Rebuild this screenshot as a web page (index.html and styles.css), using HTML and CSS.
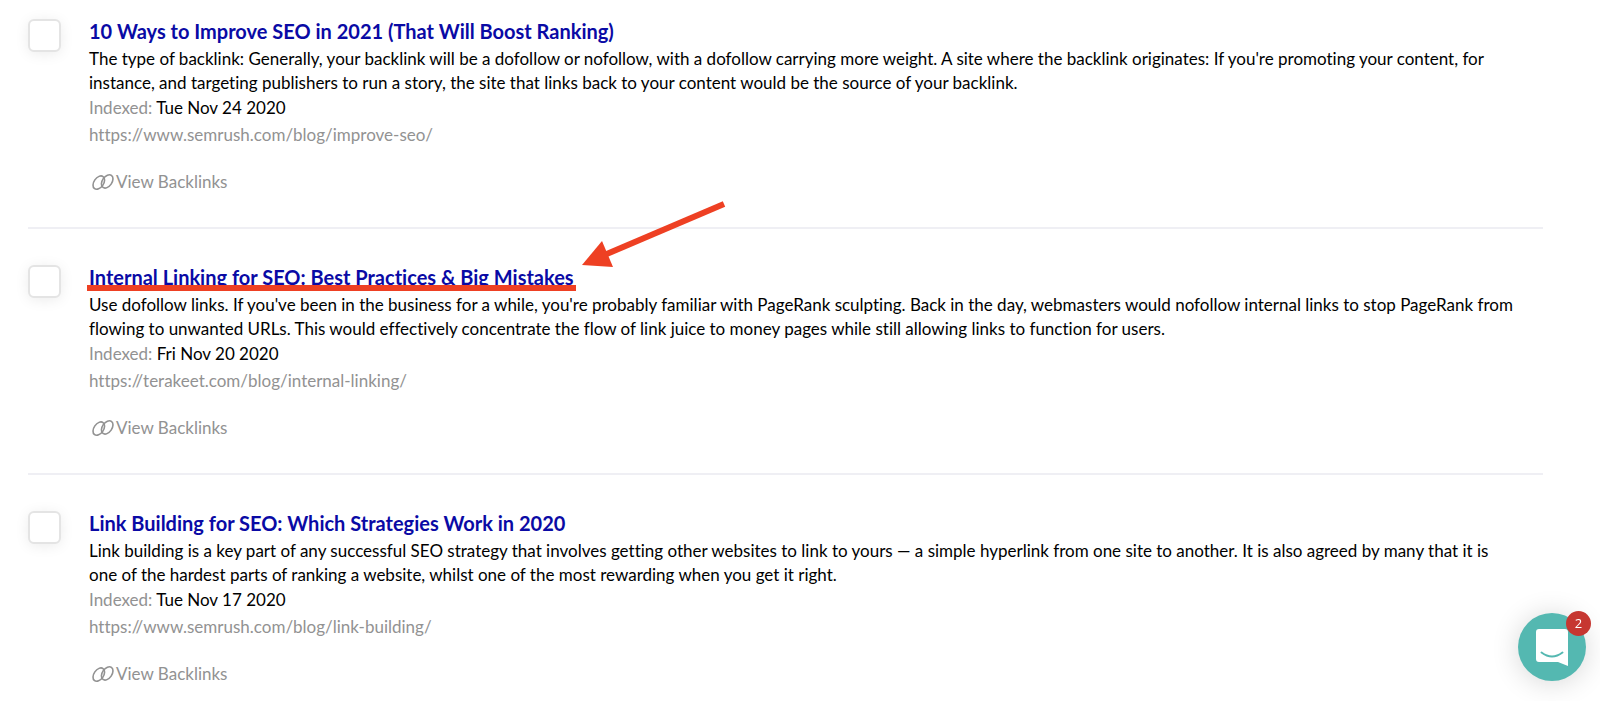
FILE: index.html
```html
<!DOCTYPE html>
<html lang="en">
<head>
  <meta charset="UTF-8" />
  <meta name="viewport" content="width=device-width, initial-scale=1.0"/>
  <title>Backlink Results</title>
  <link rel="stylesheet" href="styles.css">
</head>
<body>

  <!-- link icon, reused by every result -->
  <svg class="sprite" aria-hidden="true">
    <symbol id="icon-link" viewBox="0 0 24 18">
      <g fill="none" stroke="currentColor" stroke-width="1.6">
        <ellipse cx="7.8" cy="9.6" rx="7.4" ry="4.8" transform="rotate(-55 7.8 9.6)"/>
        <ellipse cx="16.2" cy="8.4" rx="7.4" ry="4.8" transform="rotate(-55 16.2 8.4)"/>
      </g>
    </symbol>
  </svg>

  <main class="results">
    <article class="result">
      <input type="checkbox" class="check" id="result-1" aria-labelledby="title-1">
      <div class="result-body">
        <h2 class="title"><a href="#" id="title-1">10 Ways to Improve SEO in 2021 (That Will Boost Ranking)</a></h2>
        <p class="description">The type of backlink: Generally, your backlink will be a dofollow or nofollow, with a dofollow carrying more weight. A site where the backlink originates: If you're promoting your content, for instance, and targeting publishers to run a story, the site that links back to your content would be the source of your backlink.</p>
        <div class="indexed"><span class="label">Indexed:</span> Tue Nov 24 2020</div>
        <a href="#" class="url">https://www.semrush.com/blog/improve-seo/</a>
        <button class="backlinks"><svg class="icon"><use href="#icon-link"/></svg>View Backlinks</button>
      </div>
    </article>

    <article class="result">
      <input type="checkbox" class="check" id="result-2" aria-labelledby="title-2">
      <div class="result-body">
        <h2 class="title marked">
          <a href="#" id="title-2">Internal Linking for SEO: Best Practices &amp; Big Mistakes</a>
          <svg class="arrow" viewBox="0 0 144 68" aria-hidden="true">
            <path d="M142 3 L20 55" stroke="#ee4023" stroke-width="6"/>
            <path d="M0 64 L20 40 L31 66 Z" fill="#ee4023"/>
          </svg>
        </h2>
        <p class="description">Use dofollow links. If you've been in the business for a while, you're probably familiar with PageRank sculpting. Back in the day, webmasters would nofollow internal links to stop PageRank from flowing to unwanted URLs. This would effectively concentrate the flow of link juice to money pages while still allowing links to function for users.</p>
        <div class="indexed"><span class="label">Indexed:</span> Fri Nov 20 2020</div>
        <a href="#" class="url">https://terakeet.com/blog/internal-linking/</a>
        <button class="backlinks"><svg class="icon"><use href="#icon-link"/></svg>View Backlinks</button>
      </div>
    </article>

    <article class="result">
      <input type="checkbox" class="check" id="result-3" aria-labelledby="title-3">
      <div class="result-body">
        <h2 class="title"><a href="#" id="title-3">Link Building for SEO: Which Strategies Work in 2020</a></h2>
        <p class="description">Link building is a key part of any successful SEO strategy that involves getting other websites to link to yours — a simple hyperlink from one site to another. It is also agreed by many that it is one of the hardest parts of ranking a website, whilst one of the most rewarding when you get it right.</p>
        <div class="indexed"><span class="label">Indexed:</span> Tue Nov 17 2020</div>
        <a href="#" class="url">https://www.semrush.com/blog/link-building/</a>
        <button class="backlinks"><svg class="icon"><use href="#icon-link"/></svg>View Backlinks</button>
      </div>
    </article>
  </main>

  <button class="chat" aria-label="Open chat, 2 unread">
    <svg class="chat-icon" viewBox="0 0 32 37" aria-hidden="true">
      <path d="M3 0 H29 Q32 0 32 3 V37 L22 33 H3 Q0 33 0 30 V3 Q0 0 3 0 Z" fill="#fff"/>
      <path d="M5.500 23.500 Q16 31.500 26.500 23.500" fill="none" stroke="#54b8b1" stroke-width="2" stroke-linecap="round"/>
    </svg>
    <span class="badge">2</span>
  </button>

</body>
</html>
```

FILE: styles.css
```css
* {
  box-sizing: border-box;
}
body {
  margin: 0;
  font-family: Lato, sans-serif;
  font-size: 17px;
  font-variant-ligatures: none;
  line-height: 24px;
  color: #000;
  background: #fff;
  overflow: hidden;
}
.sprite {
  position: absolute;
  width: 0;
  height: 0;
}
.results {
  padding: 0 57px 0 28px;
}
.result {
  display: flex;
  align-items: flex-start;
  gap: 28px;
  padding: 19px 0 33px;
  border-bottom: 2px solid #efeff4;
}
.result + .result {
  padding-top: 36px;
}
.result:last-child {
  border-bottom: none;
}
.check {
  appearance: none;
  flex: none;
  width: 33px;
  height: 33px;
  margin: 0;
  background: #fff;
  border: 2px solid #e4e4e4;
  border-radius: 6px;
  box-shadow: 0 2px 14px rgba(0, 0, 0, 0.08);
  cursor: pointer;
}
.check:checked {
  background: #54b8b1;
}
.result-body {
  flex: 1;
  padding-right: 24px;
}
.title {
  margin: 0 0 4px;
  font-size: 20px;
  line-height: 24px;
  font-weight: bold;
}
.title a {
  color: #0a0aa5;
  text-decoration: none;
}
.marked {
  position: relative;
  width: fit-content;
}
.marked::after {
  content: "";
  position: absolute;
  left: -2px;
  right: -2px;
  bottom: -2px;
  height: 6px;
  background: #ee4023;
}
.arrow {
  position: absolute;
  left: 100%;
  bottom: 20px;
  width: 144px;
  height: 68px;
  margin-left: 8px;
}
.description {
  margin: 0;
}
.indexed {
  line-height: 26px;
}
.label,
.url,
.backlinks {
  color: #929292;
}
.url {
  display: block;
  line-height: 28px;
  text-decoration: none;
}
.backlinks {
  display: flex;
  align-items: center;
  margin: 21px 0 0;
  padding: 0 0 0 2px;
  border: none;
  background: none;
  font: inherit;
  cursor: pointer;
}
.icon {
  width: 24px;
  height: 18px;
  margin-right: 1px;
}
.chat {
  position: fixed;
  right: 14px;
  bottom: 20px;
  display: flex;
  align-items: center;
  justify-content: center;
  width: 68px;
  height: 68px;
  padding: 0;
  border: none;
  border-radius: 50%;
  background: #54b8b1;
  box-shadow: 0 2px 28px rgba(0, 0, 0, 0.16);
  cursor: pointer;
}
.chat-icon {
  width: 32px;
  height: 37px;
}
.badge {
  position: absolute;
  top: -2px;
  right: -5px;
  width: 25px;
  height: 25px;
  border-radius: 50%;
  background: #c63731;
  color: #fff;
  font-family: "Open Sans", sans-serif;
  font-size: 13px;
  line-height: 24px;
  text-align: center;
}
```
